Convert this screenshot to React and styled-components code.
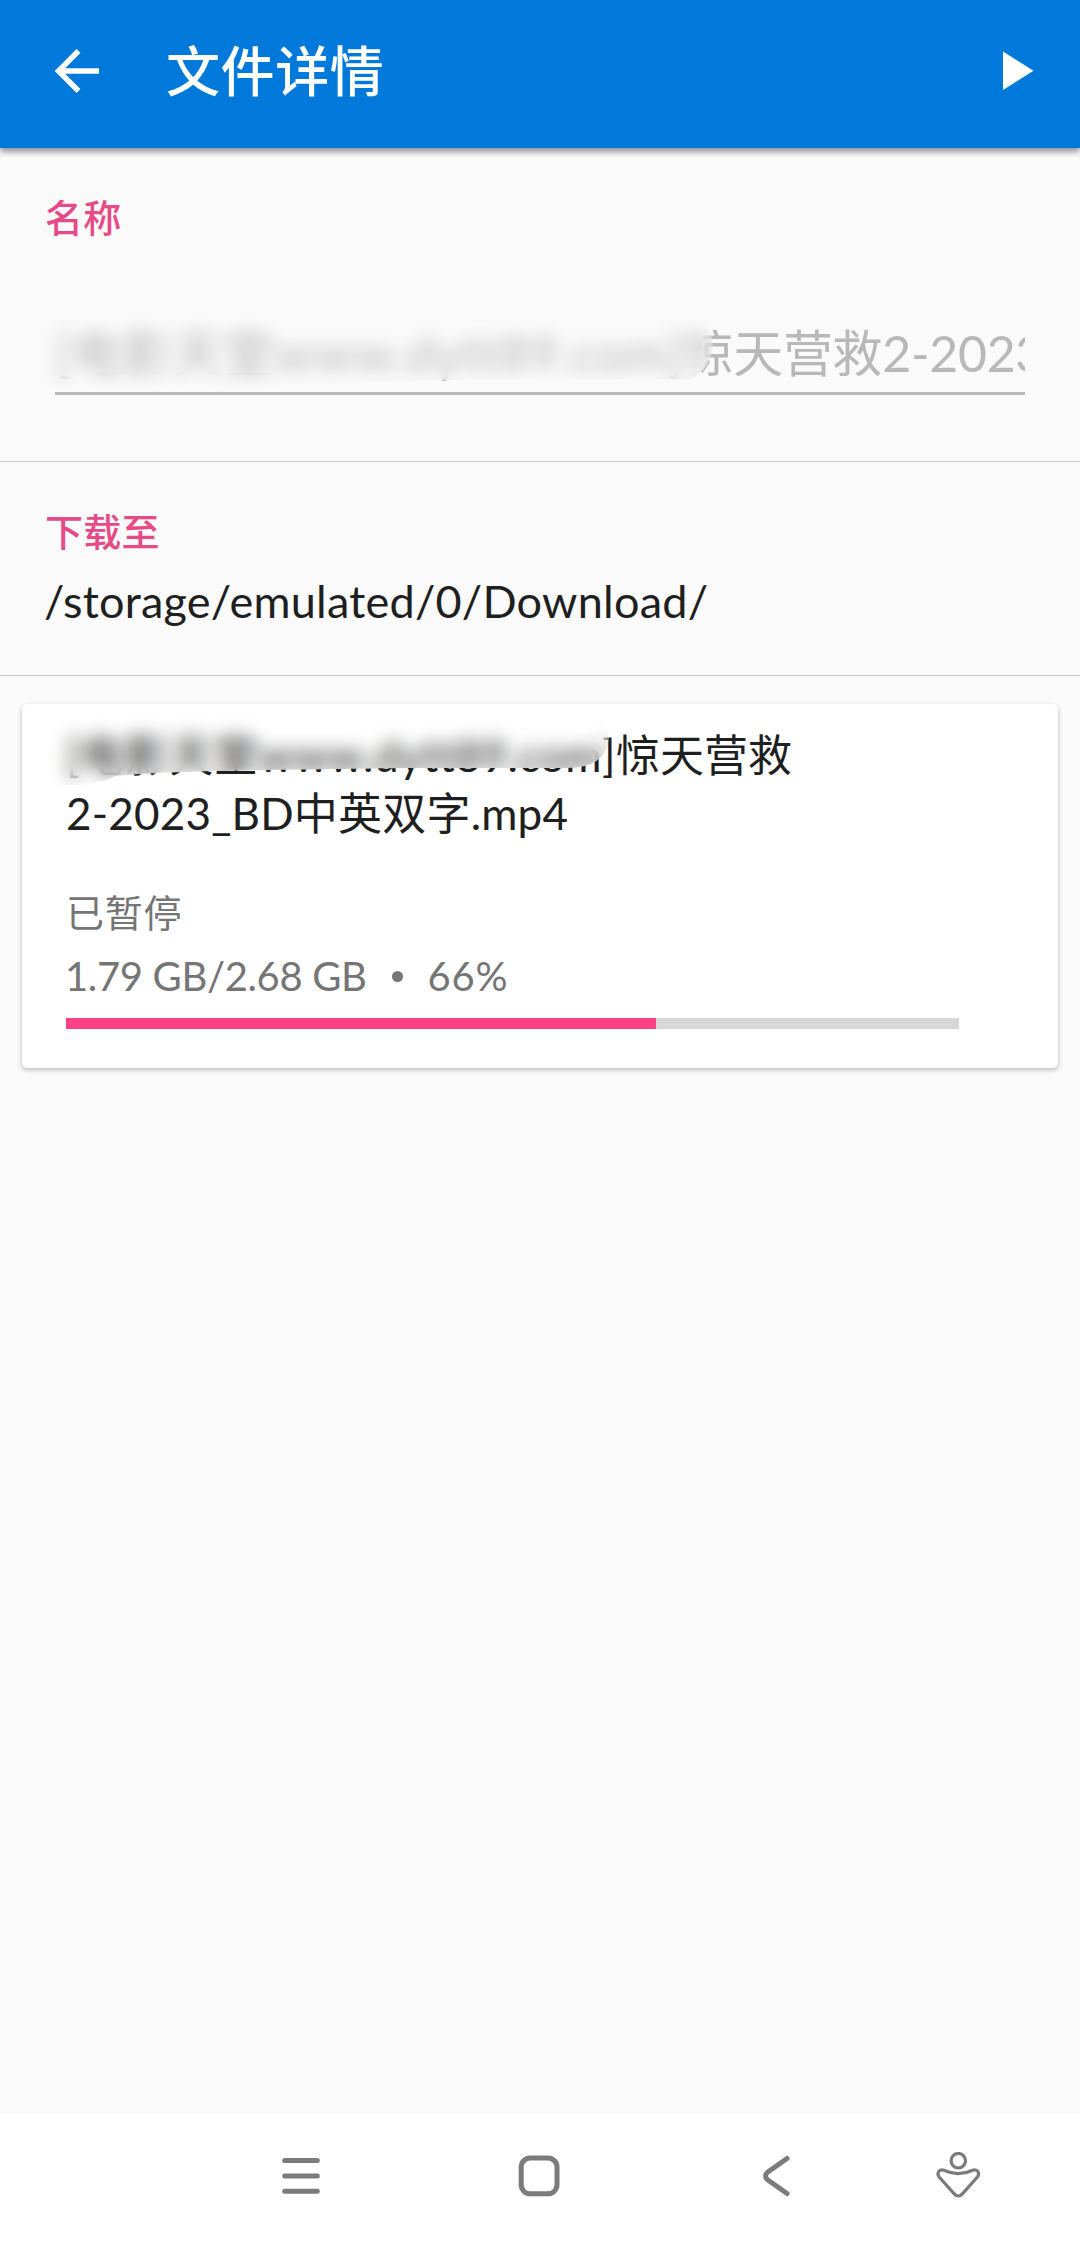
import React from 'react';
import styled, { createGlobalStyle } from 'styled-components';

const file = {
    source: '[电影天堂www.dytt89.com]',
    title: '惊天营救',
    rest: '2-2023_BD中英双字.mp4',
    folder: '/storage/emulated/0/Download/',
    status: '已暂停',
    size: '1.79 GB/2.68 GB',
    progress: 0.661,
};

function App() {
    return (
        <>
            <GlobalStyle />
            <Screen>
                <AppBar>
                    <BarButton aria-label="返回">
                        <svg width="48" height="48" viewBox="0 0 48 48" fill="none" stroke="#fff" strokeWidth="5.4">
                            <path d="M47 24H7M26.5 4L6.5 24L26.5 44" />
                        </svg>
                    </BarButton>
                    <BarTitle>文件详情</BarTitle>
                    <BarButton aria-label="开始">
                        <svg width="48" height="48" viewBox="0 0 48 48" fill="#fff">
                            <path d="M9 4.5V43L39.5 23.7Z" />
                        </svg>
                    </BarButton>
                </AppBar>

                <Section>
                    <Label>名称</Label>
                    <NameField>
                        <NameText>
                            <Source $spacing="0.85px">{file.source}</Source>
                            {file.title}
                            {file.rest}
                        </NameText>
                        <FieldSmudge />
                    </NameField>
                </Section>

                <Section>
                    <Label>下载至</Label>
                    <Path>{file.folder}</Path>
                </Section>

                <Card>
                    <FileName>
                        <Source $spacing="0.6px">{file.source}</Source>
                        {file.title}
                        <br />
                        <Source $spacing="0.2px">{file.rest}</Source>
                        <CardSmudge />
                    </FileName>
                    <Status>{file.status}</Status>
                    <Stats>
                        <Size>{file.size}</Size>
                        <Dot />
                        <Percent>{Math.round(file.progress * 100)}%</Percent>
                    </Stats>
                    <Track>
                        <Fill style={{ width: `${file.progress * 100}%` }} />
                    </Track>
                </Card>

                <NavBar>
                    <svg width="48" height="48" viewBox="0 0 48 48">
                        <path d="M7.7 8.5H40.3M7.7 24H40.3M7.7 39.3H40.3" />
                    </svg>
                    <svg width="48" height="48" viewBox="0 0 48 48">
                        <rect x="6.2" y="6" width="35.8" height="35.8" rx="9" />
                    </svg>
                    <svg width="48" height="48" viewBox="0 0 48 48">
                        <path d="M34 6.5L14.5 20.3Q10.5 24 14.5 27.7L34 41.5" />
                    </svg>
                    <svg width="48" height="48" viewBox="0 0 48 48">
                        <Thin>
                            <circle cx="24.3" cy="8.7" r="7.2" />
                            <path d="M10 18.2Q24.3 25 38.6 18.2C43.8 16.7 46.2 21.5 43.4 25L28.6 41.6Q24.3 46.4 20 41.6L5.2 25C2.4 21.5 4.8 16.7 10 18.2Z" />
                        </Thin>
                    </svg>
                </NavBar>
            </Screen>
        </>
    );
}

const GlobalStyle = createGlobalStyle`
    * {
        box-sizing: border-box;
    }

    body {
        margin: 0;
        background: #fafafa;
        font-family: Lato, 'Noto Sans CJK SC', sans-serif;
    }
`;

const Screen = styled.div`
    display: flex;
    flex-direction: column;
    width: 1080px;
    height: 2244px;
    overflow: hidden;
    background: #fafafa;
    color: #1f1f1f;
`;

const AppBar = styled.header`
    display: flex;
    align-items: center;
    flex-shrink: 0;
    height: 148px;
    padding: 0 38px 6px 52px;
    background: #0079da;
    box-shadow: 0 4px 6px rgba(0, 0, 0, 0.4);
    color: #fff;
`;

const BarButton = styled.button`
    display: flex;
    padding: 0;
    border: 0;
    background: none;
`;

const BarTitle = styled.h1`
    flex: 1;
    margin: 2px 0 0 66px;
    font-size: 54px;
    font-weight: 500;
    line-height: 72px;
    letter-spacing: 0.6px;
`;

const Section = styled.section`
    padding: 42px 46px 44px;
    border-bottom: 1px solid #c9c9c9;

    &:first-of-type {
        padding: 42px 46px 66px;
    }
`;

const Label = styled.h2`
    margin: 0 0 0 -1px;
    font-size: 38px;
    font-weight: 500;
    line-height: 54px;
    letter-spacing: 0.3px;
    color: #e74a86;
`;

const NameField = styled.div`
    position: relative;
    margin: 79px 9px 0;
    padding-bottom: 9px;
    border-bottom: 3px solid #b8b8b8;
`;

const NameText = styled.div`
    overflow: hidden;
    white-space: nowrap;
    font-size: 50px;
    line-height: 60px;
    letter-spacing: -0.3px;
    color: #b8b8b8;
`;

const Source = styled.span`
    letter-spacing: ${({ $spacing }) => $spacing};
`;

/* frosted strip that hides the site name */
const Smudge = styled.div`
    position: absolute;
    backdrop-filter: blur(9px);
`;

const FieldSmudge = styled(Smudge)`
    left: -20px;
    top: -20px;
    width: 686px;
    height: 88px;
    clip-path: path('M0 0H650Q678 20 678 42Q676 66 656 76L408 77L208 84H0Z');
`;

const Path = styled.p`
    margin: 13px 0 0 -2px;
    font-size: 45px;
    line-height: 60px;
    letter-spacing: 0.25px;
`;

const Card = styled.article`
    margin: 28px 22px 0;
    height: 364px;
    padding: 22px 99px 0 44px;
    border-radius: 5px;
    background: #fff;
    box-shadow: 0 2px 5px rgba(0, 0, 0, 0.25);
`;

const FileName = styled.div`
    position: relative;
    font-size: 44px;
    line-height: 58px;
    white-space: nowrap;
`;

const CardSmudge = styled(Smudge)`
    left: -20px;
    top: -20px;
    width: 570px;
    height: 82px;
    clip-path: path('M0 0H536Q563 10 563 32Q560 62 521 62H356C256 64 126 64 70 70Q48 79 34 79H0Z');
`;

const Status = styled.div`
    margin-top: 45px;
    font-size: 38px;
    line-height: 50px;
    letter-spacing: 0.7px;
    color: #757575;
`;

const Stats = styled.div`
    display: flex;
    align-items: center;
    margin-top: 11px;
    font-size: 40px;
    line-height: 56px;
    color: #757575;
`;

const Size = styled.span`
    margin-left: -1px;
    letter-spacing: -0.35px;
`;

const Dot = styled.i`
    width: 11px;
    height: 11px;
    margin: 0 25px;
    border-radius: 50%;
    background: #757575;
`;

const Percent = styled.span`
    letter-spacing: 0.8px;
`;

const Track = styled.div`
    height: 11px;
    margin-top: 14px;
    background: #d7d7d7;
`;

const Fill = styled.div`
    height: 100%;
    background: #fd4182;
`;

const NavBar = styled.nav`
    display: grid;
    grid-template-columns: 238px 238px 238px 124px;
    place-items: center;
    height: 130px;
    margin-top: auto;
    padding: 0 0 6px 182px;
    background: #fff;

    svg {
        fill: none;
        stroke: #7b7b7b;
        stroke-width: 5;
        stroke-linecap: round;
        stroke-linejoin: round;
    }
`;

const Thin = styled.g`
    stroke-width: 3.2;
`;

export default App;
